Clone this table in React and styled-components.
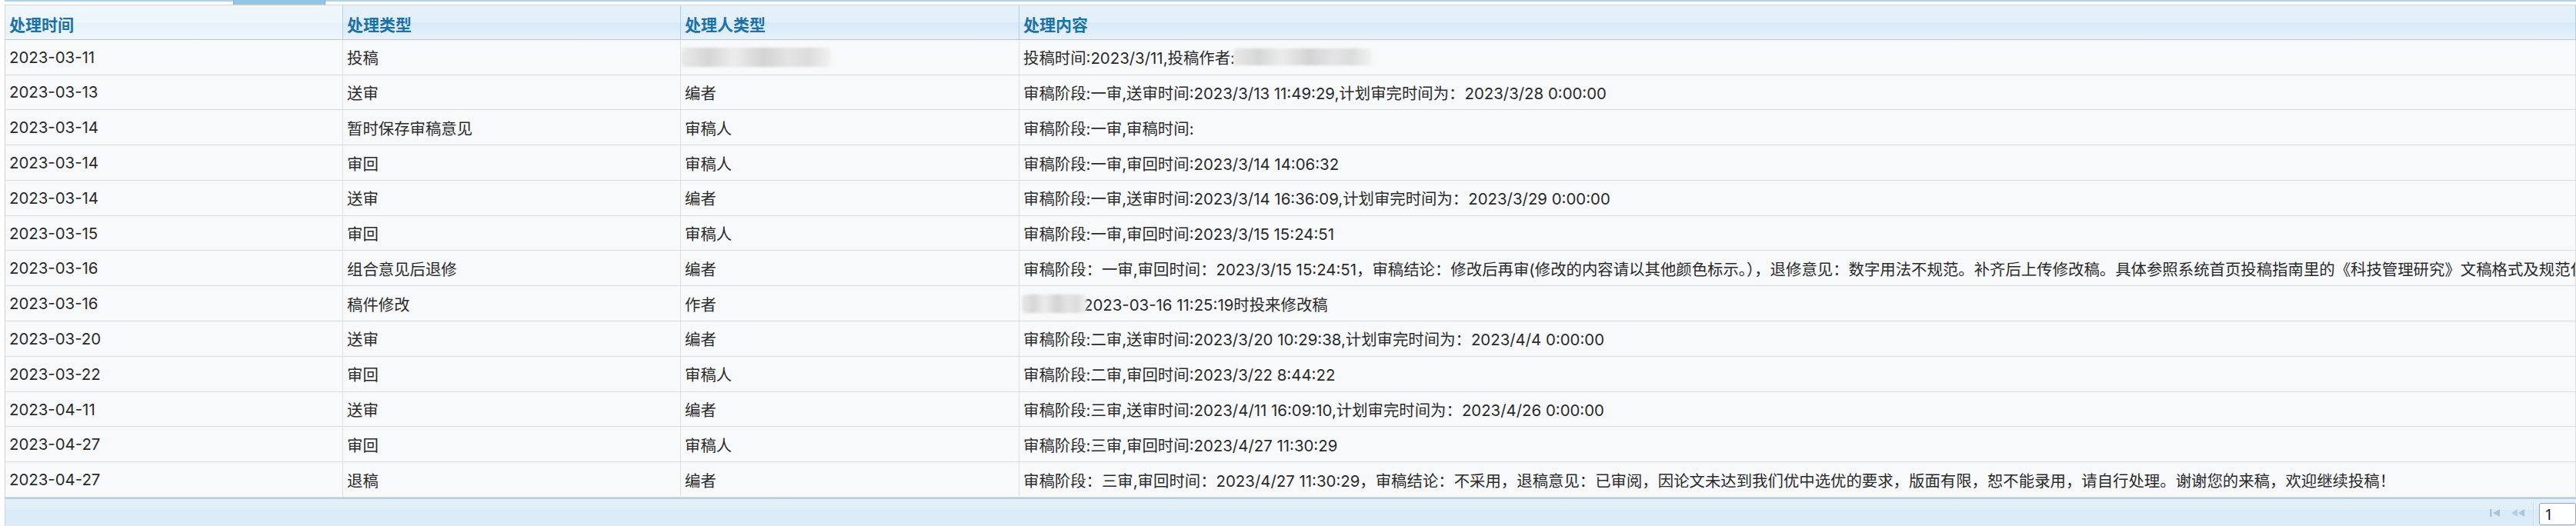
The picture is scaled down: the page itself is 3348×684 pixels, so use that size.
import React from 'react';
import styled, { createGlobalStyle } from 'styled-components';

const GlobalStyle = createGlobalStyle`
  html, body { margin: 0; padding: 0; background: #ffffff; }
  body {
    font-family: "Noto Sans", "Noto Sans CJK SC", sans-serif;
    overflow: hidden;
  }
`;

const Page = styled.div`
  height: 684px;
  padding-left: 6px;
  display: flex;
  flex-direction: column;
  overflow: hidden;
`;

const TabStrip = styled.div`
  height: 4px;
  border-top: 2px solid #acd3f1;
  display: flex;
`;

const ActiveTab = styled.div`
  margin-left: 297px;
  margin-top: -2px;
  width: 118px;
  height: 6px;
  background: #8fc6ec;
  border-left: 1px solid #74b4e2;
  border-right: 1px solid #74b4e2;
`;

const Grid = styled.div`
  flex: 1;
  display: flex;
  flex-direction: column;
  border-top: 1px solid #d6d6d6;
  border-left: 1px solid #d4d4d4;
  background: #f8f9fb;
  min-height: 0;
`;

const cols = '439px 439px 440px 1fr';

const HeadRow = styled.div`
  display: grid;
  grid-template-columns: ${cols};
  height: 44px;
  border-bottom: 1px solid #a7cbe8;
  background: linear-gradient(to bottom, #e4f1fb 0, #e3f0fa 50%, #d7e9f8 51%, #e7f2fb 100%);
`;

const HeadCell = styled.div`
  display: flex;
  align-items: center;
  padding: 4px 5px 0;
  border-right: 1px solid #add2ef;
  font-size: 21px;
  font-weight: bold;
  color: #1c72a6;
  white-space: nowrap;
  ${p => p.$light ? 'background: linear-gradient(to bottom, #eff6fc 0, #eef6fc 50%, #e6f1fb 51%, #eef6fc 100%);' : ''}
`;

const Row = styled.div`
  display: grid;
  grid-template-columns: ${cols};
  height: 45px;
  border-bottom: 1px solid #dadada;
`;

const Cell = styled.div`
  display: flex;
  align-items: center;
  padding: 0 5px;
  border-right: 1px solid #e0e0e0;
  font-family: "Inter", "Noto Sans CJK SC", sans-serif;
  font-size: 20.4px;
  color: #2a2a2a;
  white-space: nowrap;
  overflow: hidden;
`;

const Blur = styled.span`
  display: inline-block;
  flex: none;
  width: ${p => p.$w}px;
  height: ${p => p.$h}px;
  margin-left: ${p => p.$ml || 0}px;
  margin-right: ${p => p.$mr || 0}px;
  border-radius: 5px;
  background: linear-gradient(90deg, #e9e9e9 0, #d6d6d6 18%, #ececec 35%, #d3d3d3 55%, #e4e4e4 72%, #dcdcdc 85%, #f2f2f2 100%);
  filter: blur(1.5px);
`;

const Footer = styled.div`
  flex: 1;
  border-top: 2px solid #aecfeb;
  background: linear-gradient(to bottom, #e3f0fa 0, #e1eff9 40%, #d9eaf8 41%, #dcecf8 100%);
  display: flex;
  justify-content: flex-end;
  align-items: flex-start;
  padding-top: 5px;
`;

const PagerBtn = styled.span`
  display: flex;
  align-items: center;
  height: 26px;
  margin-right: ${p => p.$mr}px;
  color: #a9c5dc;
`;

const Separator = styled.span`
  width: 1px;
  height: 30px;
  background: #c8d6e2;
  border-right: 1px solid #f4f9fd;
  margin-right: 6px;
`;

const PageInput = styled.div`
  width: 40px;
  height: 27px;
  background: #ffffff;
  border: 1px solid #9aa5ae;
  border-radius: 3px;
  padding-left: 6px;
  font-size: 20px;
  line-height: 27px;
  color: #0b1a3a;
`;

const rows = [
  ['2023-03-11', '投稿', <Blur $w={194} $h={25} $ml={-4} />, <>投稿时间:2023/3/11,投稿作者:<Blur $w={180} $h={22} $ml={-2} /></>],
  ['2023-03-13', '送审', '编者', '审稿阶段:一审,送审时间:2023/3/13 11:49:29,计划审完时间为：2023/3/28 0:00:00'],
  ['2023-03-14', '暂时保存审稿意见', '审稿人', '审稿阶段:一审,审稿时间:'],
  ['2023-03-14', '审回', '审稿人', '审稿阶段:一审,审回时间:2023/3/14 14:06:32'],
  ['2023-03-14', '送审', '编者', '审稿阶段:一审,送审时间:2023/3/14 16:36:09,计划审完时间为：2023/3/29 0:00:00'],
  ['2023-03-15', '审回', '审稿人', '审稿阶段:一审,审回时间:2023/3/15 15:24:51'],
  ['2023-03-16', '组合意见后退修', '编者', '审稿阶段：一审,审回时间：2023/3/15 15:24:51，审稿结论：修改后再审(修改的内容请以其他颜色标示。），退修意见：数字用法不规范。补齐后上传修改稿。具体参照系统首页投稿指南里的《科技管理研究》文稿格式及规范化要求进行修改。'],
  ['2023-03-16', '稿件修改', '作者', <><Blur $w={84} $h={24} $ml={-2} $mr={-4} />2023-03-16 11:25:19时投来修改稿</>],
  ['2023-03-20', '送审', '编者', '审稿阶段:二审,送审时间:2023/3/20 10:29:38,计划审完时间为：2023/4/4 0:00:00'],
  ['2023-03-22', '审回', '审稿人', '审稿阶段:二审,审回时间:2023/3/22 8:44:22'],
  ['2023-04-11', '送审', '编者', '审稿阶段:三审,送审时间:2023/4/11 16:09:10,计划审完时间为：2023/4/26 0:00:00'],
  ['2023-04-27', '审回', '审稿人', '审稿阶段:三审,审回时间:2023/4/27 11:30:29'],
  ['2023-04-27', '退稿', '编者', '审稿阶段：三审,审回时间：2023/4/27 11:30:29，审稿结论：不采用，退稿意见：已审阅，因论文未达到我们优中选优的要求，版面有限，恕不能录用，请自行处理。谢谢您的来稿，欢迎继续投稿！'],
];

const FirstIcon = () => (
  <svg width="14" height="10" viewBox="0 0 14 10">
    <rect x="0" y="0" width="2.5" height="10" fill="currentColor" />
    <path d="M13 0 L4 5 L13 10 Z" fill="currentColor" />
  </svg>
);

const PrevIcon = () => (
  <svg width="18" height="10" viewBox="0 0 18 10">
    <path d="M8 0 L0 5 L8 10 Z" fill="currentColor" opacity="0.8" />
    <path d="M17 0 L9 5 L17 10 Z" fill="currentColor" />
  </svg>
);

export default function App() {
  return (
    <Page>
      <GlobalStyle />
      <TabStrip>
        <ActiveTab />
      </TabStrip>
      <Grid>
        <HeadRow>
          <HeadCell $light>处理时间</HeadCell>
          <HeadCell>处理类型</HeadCell>
          <HeadCell>处理人类型</HeadCell>
          <HeadCell>处理内容</HeadCell>
        </HeadRow>
        {rows.map((r, i) => (
          <Row key={i}>
            {r.map((c, j) => (
              <Cell key={j}>{c}</Cell>
            ))}
          </Row>
        ))}
        <Footer>
          <PagerBtn $mr={14}><FirstIcon /></PagerBtn>
          <PagerBtn $mr={10}><PrevIcon /></PagerBtn>
          <Separator />
          <PageInput>1</PageInput>
        </Footer>
      </Grid>
    </Page>
  );
}
